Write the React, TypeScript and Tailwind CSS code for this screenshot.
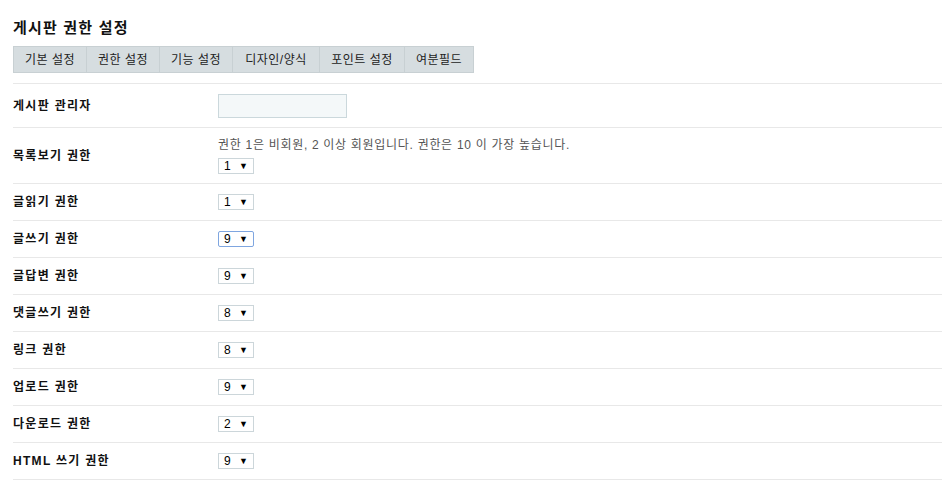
import React from "react";

const tabs: { name: string; w: string }[] = [
  { name: "기본 설정", w: "w-[72px]" },
  { name: "권한 설정", w: "w-[73px]" },
  { name: "기능 설정", w: "w-[73px]" },
  { name: "디자인/양식", w: "w-[87px]" },
  { name: "포인트 설정", w: "w-[85px]" },
  { name: "여분필드", w: "w-[69px]" },
];

const rows: { label: string; value: string; focus?: boolean }[] = [
  { label: "글읽기 권한", value: "1" },
  { label: "글쓰기 권한", value: "9", focus: true },
  { label: "글답변 권한", value: "9" },
  { label: "댓글쓰기 권한", value: "8" },
  { label: "링크 권한", value: "8" },
  { label: "업로드 권한", value: "9" },
  { label: "다운로드 권한", value: "2" },
  { label: "HTML 쓰기 권한", value: "9" },
];

function LevelSelect({ value, focus }: { value: string; focus?: boolean }) {
  return (
    <div
      className={
        "flex h-[16px] w-[36px] items-center justify-between bg-white pl-[5px] pr-[5px] text-[12px] leading-none text-black " +
        (focus ? "rounded-[2px] border border-[#7fa6e0]" : "border border-[#ccd6da]")
      }
    >
      <span>{value}</span>
      <span className="text-[9px]">▼</span>
    </div>
  );
}

export default function App() {
  return (
    <div
      className="min-h-screen w-full bg-white pl-[13px] pt-[17px] text-[#222]"
      style={{ fontFamily: '"Liberation Sans", "Noto Sans CJK KR", sans-serif' }}
    >
      <h2 className="h-[22px] text-[15px] font-bold leading-[22px] tracking-[1.2px] text-[#111]">게시판 권한 설정</h2>

      <div className="mt-[7px] flex">
        <div className="flex border border-[#c8d0d3] bg-[#d6dde0]">
          {tabs.map((t, i) => (
            <div
              key={t.name}
              className={
                "flex h-[25px] items-center justify-center text-[12px] tracking-[0.5px] text-[#222] " +
                t.w +
                (i > 0 ? " border-l border-[#c8d0d3]" : "")
              }
            >
              {t.name}
            </div>
          ))}
        </div>
      </div>

      <div className="mt-[10px] border-t border-[#e8e8e8]">
        {/* 관리자 */}
        <div className="flex h-[44px] items-center border-b border-[#e8e8e8]">
          <div className="w-[205px] text-[12px] font-bold tracking-[1.3px] text-[#111]">게시판 관리자</div>
          <div className="h-[24px] w-[129px] border border-[#cbd8dc] bg-[#f4f8f9]" />
        </div>

        {/* 목록보기 */}
        <div className="flex h-[56px] items-center border-b border-[#e8e8e8]">
          <div className="w-[205px] text-[12px] font-bold tracking-[1.3px] text-[#111]">목록보기 권한</div>
          <div className="flex flex-col">
            <div className="text-[12px] leading-[16px] tracking-[0.7px] text-[#555]">
              권한 1은 비회원, 2 이상 회원입니다. 권한은 10 이 가장 높습니다.
            </div>
            <div className="mt-[5px]">
              <LevelSelect value="1" />
            </div>
          </div>
        </div>

        {rows.map((r) => (
          <div key={r.label} className="flex h-[37px] items-center border-b border-[#e8e8e8]">
            <div className="w-[205px] text-[12px] font-bold tracking-[1.3px] text-[#111]">{r.label}</div>
            <LevelSelect value={r.value} focus={r.focus} />
          </div>
        ))}
      </div>
    </div>
  );
}
